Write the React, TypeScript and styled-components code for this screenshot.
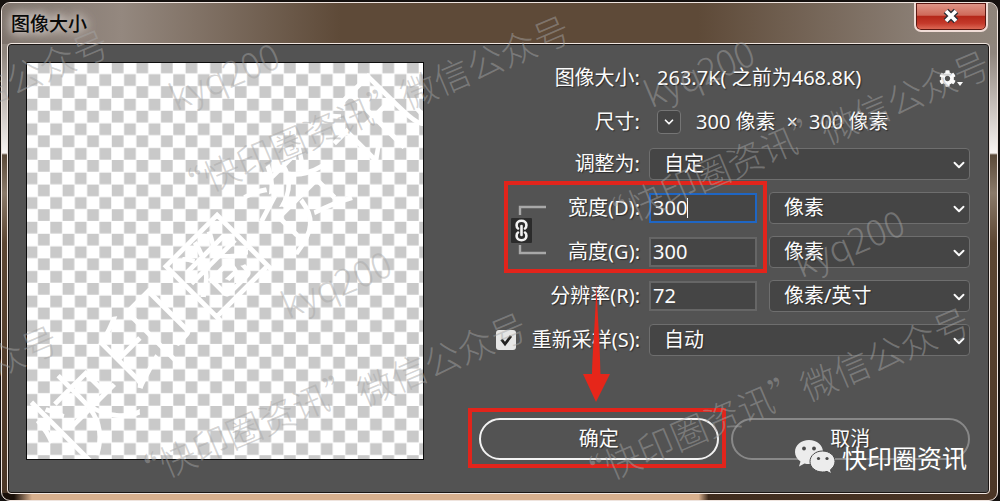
import React from "react";
import styled, { createGlobalStyle } from "styled-components";
import { ChevronDown } from "lucide-react";
import { FaCog } from "react-icons/fa";

const GlobalStyle = createGlobalStyle`
  * { box-sizing: border-box; }
  body {
    margin: 0;
    background: #15110f;
    color: #fbfbfb;
    font-family: "Noto Sans", "Noto Sans CJK SC", sans-serif;
    font-size: 20px;
    line-height: 28px;
  }
  button, input, select { font: inherit; color: inherit; margin: 0; }
`;

const Desktop = styled.div`
  position: relative;
  display: flex;
  min-height: 100vh;
  padding: 2px 2px 0 1px;
  overflow: hidden;
`;

const Frame = styled.div`
  flex: 1;
  display: flex;
  flex-direction: column;
  padding: 0 8px 7px 6px;
  border: 1px solid #efe4de;
  border-radius: 9px;
  background:
    linear-gradient(90deg, #1a1009 0, #1a1009 12px, #d8b08e 30px, #d8b08e 70%, #3f2c1e 71%, #4b3626 100%) bottom / 100% 7px no-repeat,
    linear-gradient(180deg, #8f857d 0, #8f857d 50px, #f8f4f2 150px, #5a4938 152px, #8a7a6a 190px, #5c4632 240px, #4b3626 100%);
`;

const TitleBar = styled.header`
  display: flex;
  align-items: center;
  justify-content: space-between;
  height: 41px;
  margin: 0 -8px 0 -6px;
  padding: 0 9px 0 7px;
  border-radius: 8px 8px 0 0;
  background: linear-gradient(90deg, #7d726b 0, #94887f 12%, #5e4a38 34%, #5e4a38 70%, #8a7e74 92%, #8f857b 100%);
`;

const Title = styled.h1`
  margin: 0;
  padding: 0 2px;
  color: #0a0a0a;
  font-size: 19px;
  font-weight: 500;
  line-height: 24px;
  text-shadow: 0 0 8px #d8d0cc, 0 0 12px #d8d0cc, 0 0 16px #c8c0bc;
`;

const CloseButton = styled.button`
  align-self: flex-start;
  display: grid;
  place-items: center;
  width: 74px;
  height: 29px;
  padding: 0 0 2px;
  border: 2px solid #f0dcd6;
  border-top: 0;
  border-radius: 0 0 7px 7px;
  box-shadow: inset 0 0 0 1px #5a1812;
  background: linear-gradient(180deg, #e0988a 0, #cf6a5a 45%, #b5281a 50%, #c4392a 75%, #e0705c 100%);
`;

const Panel = styled.main`
  flex: 1;
  display: flex;
  align-items: flex-start;
  gap: 45px;
  padding: 17px 18px 27px 17px;
  border: 1px solid #1a1614;
  border-radius: 3px;
  outline: 1px solid #f0e6e0;
  background: #535353;
`;

const Preview = styled.svg`
  flex: none;
  width: 398px;
  height: 398px;
  border: 1px solid #0c0c0c;
  background: #fff;
`;

const Form = styled.form`
  flex: 1;
  min-width: 0;
  text-shadow: 1px 1px 1px #2c2c2c;
`;

const Rows = styled.div<{ $top?: number }>`
  display: grid;
  gap: 12px;
  margin-top: ${(p) => p.$top ?? 0}px;
`;

const Row = styled.div`
  display: grid;
  grid-template-columns: 168px 108px minmax(0, 1fr);
  gap: 12px;
  align-items: center;
  min-height: 32px;
`;

const Label = styled.label`
  margin-right: -3px;
  text-align: right;
  white-space: nowrap;
`;

const CheckLabel = styled(Label)`
  display: flex;
  align-items: center;
  justify-content: flex-end;
  gap: 16px;
`;

const Wide = styled.div`
  grid-column: 2 / -1;
`;

const Info = styled(Wide)`
  display: flex;
  align-items: center;
  gap: 15px;
  padding: 0 6px 0 8px;
  white-space: nowrap;
`;

const Measure = styled.span`
  display: flex;
  gap: 11px;
`;

const GearButton = styled.button`
  display: flex;
  align-items: center;
  margin-left: auto;
  padding: 0;
  border: 0;
  background: none;
`;

const MiniButton = styled.button`
  display: grid;
  place-items: center;
  width: 24px;
  height: 24px;
  padding: 0;
  border: 1px solid #757575;
  border-radius: 4px;
  background: #454545;
`;

const SelectBox = styled.div`
  position: relative;
  svg {
    position: absolute;
    right: 2px;
    top: 8px;
    pointer-events: none;
  }
`;

const Select = styled.select`
  display: block;
  width: 100%;
  height: 32px;
  padding: 0 32px 0 14px;
  appearance: none;
  border: 1px solid #6e6e6e;
  border-radius: 4px;
  background: #454545;
  text-shadow: inherit;
`;

const InputBox = styled.div`
  position: relative;
`;

const Input = styled.input<{ $active?: boolean }>`
  display: block;
  width: 100%;
  height: 30px;
  padding: 0 2px 2px;
  border: ${(p) => (p.$active ? "2px solid #1f66c4" : "2px solid #666")};
  border-radius: 0;
  outline: 0;
  background: #454545;
`;

const Caret = styled.span`
  position: absolute;
  left: 38px;
  top: 5px;
  width: 1px;
  height: 20px;
  background: #fff;
`;

const Dimensions = styled.fieldset`
  position: relative;
  display: grid;
  grid-template-columns: 78px 78px 108px minmax(0, 1fr);
  grid-auto-rows: 32px;
  gap: 12px;
  align-items: center;
  min-width: 0;
  margin: 0;
  padding: 0;
  border: 0;
`;

const LinkToggle = styled.button`
  grid-row: 1 / span 2;
  justify-self: end;
  height: 56px;
  padding: 0;
  border: 0;
  background: none;
  svg { display: block; }
`;

const Highlight = styled.div<{ $area: string }>`
  position: absolute;
  inset: ${(p) => p.$area};
  border: 4px solid #e2241b;
  pointer-events: none;
`;

const Arrow = styled.svg`
  position: absolute;
  left: 112px;
  bottom: 58px;
  pointer-events: none;
`;

const Checkbox = styled.input`
  appearance: none;
  width: 20px;
  height: 20px;
  border-radius: 3px;
  background: #e6e6e6;
`;

const Tick = styled.svg`
  position: absolute;
  inset: 0;
  pointer-events: none;
`;

const CheckHolder = styled.span`
  position: relative;
  display: flex;
`;

const Actions = styled.div`
  position: relative;
  display: grid;
  grid-template-columns: 1fr 1fr;
  gap: 12px;
  margin: 62px 0 0 10px;
`;

const ActionButton = styled.button<{ $primary?: boolean }>`
  height: 42px;
  padding: 0;
  border: ${(p) => (p.$primary ? "2px solid #f2f2f2" : "2px solid #888")};
  border-radius: 21px;
  background: transparent;
  text-shadow: inherit;
`;

const Stamp = styled.span<{ $x: number; $y: number }>`
  position: absolute;
  left: ${(p) => p.$x}px;
  top: ${(p) => p.$y}px;
  color: rgba(165, 165, 165, 0.48);
  font-family: "Noto Sans CJK SC", sans-serif;
  font-size: 36px;
  font-weight: 300;
  line-height: 40px;
  white-space: nowrap;
  transform: translate(-50%, -50%) rotate(-23deg);
  pointer-events: none;
`;

const Brand = styled.div`
  position: absolute;
  right: 33px;
  bottom: 27px;
  display: flex;
  align-items: center;
  gap: 7px;
  color: #fff;
  font-family: "Noto Sans CJK SC", sans-serif;
  font-size: 25px;
  line-height: 32px;
  pointer-events: none;
`;

const previewGlyphs: [string, number, number][] = [
  ["快", 50, 346],
  ["印", 116, 273],
  ["圈", 186, 199],
  ["资", 265, 130],
  ["讯", 341, 54],
];

const stamps: [string, number, number][] = [
  ["微信公众号", 23, 74],
  ["微信公众号", 484, 60],
  ["微信公众号", 904, 95],
  ["微信公众号", -28, 370],
  ["微信公众号", 441, 357],
  ["微信公众号", 884, 352],
  ["“快印圈资讯”", 287, 142],
  ["“快印圈资讯”", 711, 171],
  ["“快印圈资讯”", 243, 428],
  ["“快印圈资讯”", 688, 430],
  ["kyq200", 223, 74],
  ["kyq200", 698, 71],
  ["kyq200", 848, 241],
  ["kyq200", 335, 282],
];

function Dropdown({ id, label, options }: { id: string; label?: string; options: string[] }) {
  return (
    <SelectBox>
      <Select id={id} aria-label={label}>
        {options.map((o) => (
          <option key={o}>{o}</option>
        ))}
      </Select>
      <ChevronDown size={18} strokeWidth={2.5} />
    </SelectBox>
  );
}

function PreviewImage() {
  const glyphs = previewGlyphs.map(([c, x, y]) => (
    <text
      key={c}
      transform={`translate(${x} ${y}) rotate(-45)`}
      textAnchor="middle"
      dominantBaseline="central"
      fontFamily="'Noto Sans CJK SC', sans-serif"
      fontWeight="100"
      fontSize="92"
    >
      {c}
    </text>
  ));
  return (
    <Preview viewBox="0 0 396 396" role="img" aria-label="预览">
      <defs>
        <pattern id="checks" width="24.6" height="24.6" patternUnits="userSpaceOnUse" y="-1.4" x="-1.6">
          <rect width="24.6" height="24.6" fill="#fff" />
          <rect x="12.6" y="0" width="11.7" height="11.7" fill="#c9c9c9" />
          <rect x="0.3" y="12.6" width="11.7" height="11.7" fill="#c9c9c9" />
        </pattern>
      </defs>
      <rect width="396" height="396" fill="url(#checks)" />
      <g fill="#fff" stroke="#fff" strokeWidth="2">{glyphs}</g>
    </Preview>
  );
}

export default function App() {
  return (
    <Desktop>
      <GlobalStyle />
      <Frame>
        <TitleBar>
          <Title>图像大小</Title>
          <CloseButton aria-label="关闭">
            <svg width="18" height="16" viewBox="0 0 18 16">
              <path d="M4 3L14 13M14 3L4 13" stroke="#2a3038" strokeWidth="6.5" />
              <path d="M4 3L14 13M14 3L4 13" stroke="#fff" strokeWidth="3.8" />
            </svg>
          </CloseButton>
        </TitleBar>
        <Panel>
          <PreviewImage />
          <Form onSubmit={(e) => e.preventDefault()}>
            <Rows>
              <Row>
                <Label as="span">图像大小:</Label>
                <Info>
                  <span>263.7K( 之前为468.8K)</span>
                  <GearButton type="button" aria-label="设置">
                    <FaCog size={17} />
                    <svg width="8" height="17" viewBox="0 0 8 17">
                      <path d="M1 12h6l-3 4z" fill="currentColor" />
                    </svg>
                  </GearButton>
                </Info>
              </Row>
              <Row>
                <Label as="span">尺寸:</Label>
                <Info>
                  <MiniButton type="button" aria-label="单位">
                    <ChevronDown size={14} strokeWidth={3} />
                  </MiniButton>
                  <Measure>
                    <span>300 像素</span>
                    <span>×</span>
                    <span>300 像素</span>
                  </Measure>
                </Info>
              </Row>
            </Rows>
            <Rows $top={10}>
              <Row>
                <Label htmlFor="fit">调整为:</Label>
                <Wide>
                  <Dropdown id="fit" options={["自定", "原稿大小"]} />
                </Wide>
              </Row>
              <Dimensions>
                <LinkToggle type="button" aria-label="限制长宽比">
                  <svg width="36" height="56" viewBox="0 0 36 56">
                    <path d="M35 5H9V13M9 43V51H35" fill="none" stroke="#a8a8a8" strokeWidth="2.4" />
                    <rect x="0" y="16" width="21" height="25" rx="1" fill="#2b2b2b" />
                    <g fill="none" stroke="#f2f2f2" strokeWidth="2.6" strokeLinecap="round">
                      <path d="M7 26.5C5.5 25.5 5.6 24 5.6 23C5.6 20.5 7.6 18.8 10.5 18.8S15.4 20.5 15.4 23C15.4 24 15.5 25.5 14 26.5" />
                      <path d="M7 30.5C5.5 31.5 5.6 33 5.6 34C5.6 36.5 7.6 38.2 10.5 38.2S15.4 36.5 15.4 34C15.4 33 15.5 31.5 14 30.5" />
                      <path d="M10.5 24V33" />
                    </g>
                  </svg>
                </LinkToggle>
                <Label htmlFor="width">宽度(D):</Label>
                <InputBox>
                  <Input id="width" defaultValue="300" $active />
                  <Caret />
                </InputBox>
                <Dropdown id="width-unit" label="宽度单位" options={["像素", "厘米"]} />
                <Label htmlFor="height">高度(G):</Label>
                <Input id="height" defaultValue="300" />
                <Dropdown id="height-unit" label="高度单位" options={["像素", "厘米"]} />
                <Highlight $area="-11px 203px -5px 35px" />
              </Dimensions>
              <Row>
                <Label htmlFor="resolution">分辨率(R):</Label>
                <Input id="resolution" defaultValue="72" />
                <Dropdown id="resolution-unit" label="分辨率单位" options={["像素/英寸", "像素/厘米"]} />
              </Row>
              <Row>
                <CheckLabel>
                  <CheckHolder>
                    <Checkbox type="checkbox" defaultChecked />
                    <Tick width="20" height="20" viewBox="0 0 20 20">
                      <path d="M5.5 9.5L9 14L15 6" fill="none" stroke="#222" strokeWidth="2.8" />
                    </Tick>
                  </CheckHolder>
                  重新采样(S):
                </CheckLabel>
                <Wide>
                  <Dropdown id="resample" label="重新采样" options={["自动", "两次线性"]} />
                </Wide>
              </Row>
            </Rows>
            <Actions>
              <ActionButton type="submit" $primary>确定</ActionButton>
              <ActionButton type="button">取消</ActionButton>
              <Highlight $area="-10px 244px -8px -11px" />
              <Arrow width="12" height="118" viewBox="8 0 12 118" overflow="visible">
                <path d="M13.5 0C15 40 17 60 17.5 90H27L13 118L0 90H9C10 60 12 40 13.5 0Z" fill="#e6261a" />
              </Arrow>
            </Actions>
          </Form>
        </Panel>
      </Frame>
      {stamps.map(([text, x, y]) => (
        <Stamp key={`${x}-${y}`} $x={x} $y={y} aria-hidden>
          {text}
        </Stamp>
      ))}
      <Brand>
        <svg width="40" height="34" viewBox="0 0 40 34">
          <path d="M14 0C6 0 0 5.2 0 12C0 16 2 19 5.5 21.5L4 26.5L9.5 23.5C11 24 12.5 24 14 24C22 24 28 19 28 12S22 0 14 0Z" fill="#ececec" />
          <path d="M27.5 11C20.5 11 15 15.6 15 21.5S20.5 32 27.5 32C29 32 30.5 31.8 32 31.4L36.5 33.8L35.5 29.7C38.3 27.7 40 24.8 40 21.5C40 15.6 34.5 11 27.5 11Z" fill="#ececec" stroke="#4a4a4a" />
          <g fill="#4a4a4a">
            <circle cx="9" cy="8.5" r="1.9" />
            <circle cx="19" cy="8.5" r="1.9" />
            <circle cx="23.5" cy="18.5" r="1.6" />
            <circle cx="32" cy="18.5" r="1.6" />
          </g>
        </svg>
        快印圈资讯
      </Brand>
    </Desktop>
  );
}
